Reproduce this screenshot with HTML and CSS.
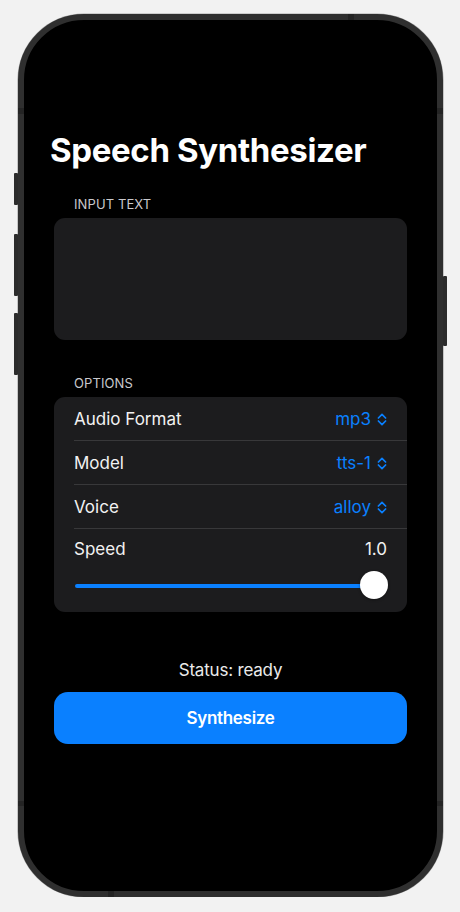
FILE: index.html
```html
<!DOCTYPE html>
<html lang="en">
<head>
<meta charset="utf-8">
<title>Speech Synthesizer</title>
<link rel="stylesheet" href="styles.css">
</head>
<body>
<div class="phone">
  <span class="btn btn-action"></span>
  <span class="btn btn-vol-up"></span>
  <span class="btn btn-vol-down"></span>
  <span class="btn btn-power"></span>
  <span class="band band-top"></span>
  <span class="band band-bottom"></span>
  <span class="band band-l1"></span>
  <span class="band band-r1"></span>
  <span class="band band-l2"></span>
  <span class="band band-r2"></span>
  <main class="screen">
    <h1 class="title">Speech Synthesizer</h1>

    <section class="group">
      <div class="group-label">INPUT TEXT</div>
      <div class="textbox"></div>
    </section>

    <section class="group group-options">
      <div class="group-label">OPTIONS</div>
      <div class="card">
        <div class="row">
          <span class="row-label">Audio Format</span>
          <span class="picker">mp3<svg class="chev" viewBox="0 0 10 13" width="10" height="13"><path d="M1.4 5 L5 1.4 L8.6 5 M1.4 8 L5 11.6 L8.6 8"/></svg></span>
        </div>
        <div class="row">
          <span class="row-label">Model</span>
          <span class="picker">tts-1<svg class="chev" viewBox="0 0 10 13" width="10" height="13"><path d="M1.4 5 L5 1.4 L8.6 5 M1.4 8 L5 11.6 L8.6 8"/></svg></span>
        </div>
        <div class="row">
          <span class="row-label">Voice</span>
          <span class="picker">alloy<svg class="chev" viewBox="0 0 10 13" width="10" height="13"><path d="M1.4 5 L5 1.4 L8.6 5 M1.4 8 L5 11.6 L8.6 8"/></svg></span>
        </div>
        <div class="speed">
          <div class="speed-head">
            <span class="row-label">Speed</span>
            <span class="speed-value">1.0</span>
          </div>
          <div class="slider">
            <div class="track"></div>
            <div class="thumb"></div>
          </div>
        </div>
      </div>
    </section>

    <p class="status">Status: ready</p>
    <button class="primary" type="button">Synthesize</button>
  </main>
</div>
</body>
</html>
```

FILE: styles.css
```css
* { box-sizing: border-box; }

html, body {
  margin: 0;
  padding: 0;
  background: #f2f2f2;
  overflow: hidden;
}

body {
  font-family: Inter, "Noto Sans", "Liberation Sans", sans-serif;
  color: #fff;
}

.phone {
  position: relative;
  width: 425px;
  height: 883px;
  margin: 14px 0 0 18px;
  border: 6px solid #2f2f2f;
  border-radius: 66px;
  background: #000;
  box-shadow: 0 0 0 0.6px #a8a8a8;
}

.btn {
  position: absolute;
  width: 4px;
  background: #2c2c2c;
  border-radius: 1px;
}
.btn-action { left: -10px; top: 153px; height: 32px; }
.btn-vol-up { left: -10px; top: 214px; height: 62px; }
.btn-vol-down { left: -10px; top: 293px; height: 62px; }
.btn-power { right: -10px; top: 256px; height: 70px; }

.band {
  position: absolute;
  background: #242424;
}
.band-top { top: -6px; left: 324px; width: 6px; height: 6px; }
.band-bottom { bottom: -6px; left: 84px; width: 6px; height: 6px; }
.band-l1 { left: -6px; top: 88px; width: 6px; height: 6px; }
.band-r1 { right: -6px; top: 88px; width: 6px; height: 6px; }
.band-l2 { left: -6px; top: 781px; width: 6px; height: 5px; }
.band-r2 { right: -6px; top: 781px; width: 6px; height: 5px; }

.screen {
  padding: 110px 30px 0;
}

.title {
  margin: 0 0 0 -4px;
  font-size: 33px;
  line-height: 41px;
  font-weight: 700;
  letter-spacing: -0.35px;
  color: #fff;
}

.group {
  margin-top: 25px;
}
.group-options {
  margin-top: 35px;
}

.group-label {
  padding-left: 20px;
  font-size: 13px;
  line-height: 16px;
  color: #c9c9cd;
  letter-spacing: 0.1px;
  margin-bottom: 6px;
}

.textbox {
  height: 122px;
  border-radius: 11px;
  background: #1c1c1e;
}

.card {
  border-radius: 11px;
  background: #1c1c1e;
  padding-left: 20px;
}

.row {
  display: flex;
  align-items: center;
  justify-content: space-between;
  height: 44px;
  padding-right: 20px;
  border-bottom: 1px solid #38383a;
  font-size: 17px;
}

.row-label {
  font-size: 17px;
  line-height: 22px;
  color: #f2f2f2;
}

.picker {
  display: inline-flex;
  align-items: center;
  gap: 6px;
  font-size: 17px;
  line-height: 22px;
  color: #0a80ff;
}

.chev {
  fill: none;
  stroke: #0a80ff;
  stroke-width: 1.7;
  stroke-linecap: round;
  stroke-linejoin: round;
  margin-top: 1px;
}

.speed {
  padding: 9px 20px 13px 0;
}

.speed-head {
  display: flex;
  justify-content: space-between;
  height: 22px;
}

.speed-value {
  font-size: 17px;
  line-height: 22px;
  color: #f2f2f2;
}

.slider {
  position: relative;
  height: 28px;
  margin-top: 11px;
}

.track {
  position: absolute;
  left: 1px;
  right: 4px;
  top: 13px;
  height: 4px;
  border-radius: 2px;
  background: #0a80ff;
}

.thumb {
  position: absolute;
  right: -1px;
  top: 0;
  width: 28px;
  height: 28px;
  border-radius: 50%;
  background: #fff;
  box-shadow: 0 1px 3px rgba(0, 0, 0, 0.35);
}

.status {
  margin: 47px 0 0;
  text-align: center;
  font-size: 17px;
  line-height: 22px;
  letter-spacing: -0.2px;
  color: #ebebeb;
}

.primary {
  display: block;
  width: 100%;
  height: 52px;
  margin-top: 11px;
  border: 0;
  border-radius: 14px;
  background: #0a80ff;
  color: #fff;
  font-family: inherit;
  font-size: 17px;
  font-weight: 600;
  letter-spacing: -0.3px;
}
```
